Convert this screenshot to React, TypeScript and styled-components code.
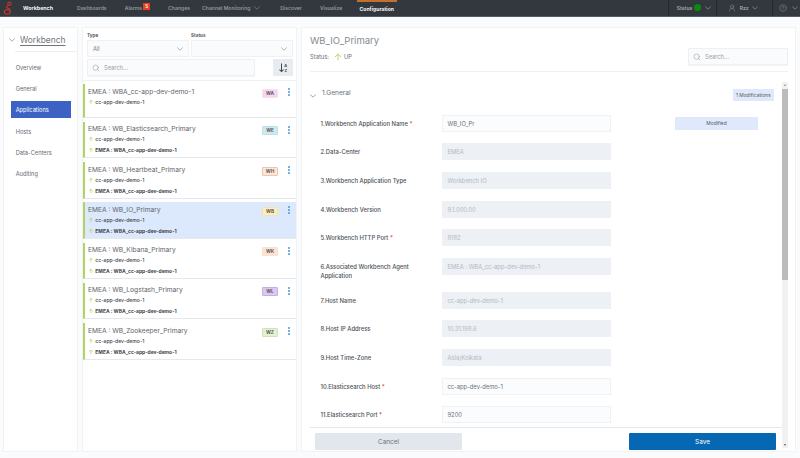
import React from 'react';
import styled, { createGlobalStyle } from 'styled-components';
import { ArrowUp, CircleHelp, Search, UserRound } from 'lucide-react';

const GlobalStyle = createGlobalStyle`
  html, body { margin: 0; padding: 0; background: #fafbfc; }
  body { font-family: Inter, "Liberation Sans", sans-serif; color: #4a4f57; }
  * { box-sizing: border-box; }
`;

const Page = styled.div`
  width: 800px;
  height: 458px;
  overflow: hidden;
  display: flex;
  flex-direction: column;
`;

const TopBar = styled.header`
  height: 17px;
  background: #32383d;
  border-bottom: 1px solid #565c66;
  display: flex;
  align-items: stretch;
  flex-shrink: 0;
`;

const Brand = styled.div`
  display: flex;
  align-items: center;
  padding-left: 3px;
  width: 77px;
  gap: 10px;
  font-size: 5.3px;
  font-weight: 700;
  color: #f2f3f4;
`;

const TopLink = styled.div<{ $left: number; $active?: boolean }>`
  display: flex;
  align-items: center;
  gap: 4px;
  margin-left: ${(p) => p.$left}px;
  padding: 0 ${(p) => (p.$active ? 3 : 0)}px ${(p) => (p.$active ? 1 : 3)}px;
  font-size: 5.1px;
  font-weight: ${(p) => (p.$active ? 700 : 600)};
  color: ${(p) => (p.$active ? '#f5f5f5' : '#8f969c')};
  border-top: 2px solid ${(p) => (p.$active ? '#c46f2c' : 'transparent')};
`;

const AlertBadge = styled.span`
  background: #e8401c;
  color: #fff;
  font-size: 4.6px;
  line-height: 7px;
  width: 7px;
  height: 7px;
  margin: -3px 0 0 -3px;
  text-align: center;
`;

const TopRight = styled.div`
  margin-left: auto;
  display: flex;
`;

const TopCell = styled.div<{ $width: number; $pad: number; $gap: number }>`
  width: ${(p) => p.$width}px;
  padding: 0 0 1px ${(p) => p.$pad}px;
  border-left: 1px solid #23272b;
  display: flex;
  align-items: center;
  gap: ${(p) => p.$gap}px;
  font-size: 5px;
  font-weight: 600;
  color: #a3a9ae;
`;

const StatusDot = styled.span`
  width: 7px;
  height: 7px;
  margin-left: -2px;
  border-radius: 50%;
  background: #0a8a12;
`;

const Body = styled.main`
  flex: 1;
  display: flex;
  gap: 4px;
  padding: 10px 4px 6px 3px;
  min-height: 0;
`;

const Panel = styled.section`
  background: #fff;
  border: 1px solid #f1f2f4;
  min-height: 0;
`;

const NavPanel = styled(Panel)`
  width: 75px;
  flex-shrink: 0;
`;

const NavHead = styled.div`
  display: flex;
  align-items: center;
  gap: 5px;
  padding-left: 5px;
  height: 23px;
  font-size: 8.4px;
  color: #6f747b;
  span { text-decoration: underline; text-underline-offset: 2px; text-decoration-thickness: 0.5px; }
`;

const NavRule = styled.div`
  height: 1px;
  margin-left: 11px;
  background: #eceef1;
  margin-bottom: 7px;
`;

const NavList = styled.nav`
  display: flex;
  flex-direction: column;
  gap: 4.2px;
  padding: 0 6px 0 7px;
`;

const NavItem = styled.div<{ $active?: boolean }>`
  height: 17px;
  line-height: 17px;
  padding-left: 4.7px;
  font-size: 5.7px;
  color: ${(p) => (p.$active ? '#fff' : '#666b72')};
  background: ${(p) => (p.$active ? '#3c62c4' : 'transparent')};
`;

const ListPanel = styled(Panel)`
  width: 215px;
  flex-shrink: 0;
  display: flex;
  flex-direction: column;
`;

const Filters = styled.div`
  display: grid;
  grid-template-columns: 101.5px 101.5px;
  column-gap: 2.5px;
  padding: 4px 0 0 4px;
`;

const FilterLabel = styled.div`
  font-size: 4.6px;
  font-weight: 700;
  color: #555a61;
  height: 8px;
  line-height: 7.5px;
`;

const Select = styled.div`
  height: 17px;
  background: #fafbfc;
  border: 1px solid #f0f1f3;
  display: flex;
  align-items: center;
  justify-content: space-between;
  padding: 0 5px;
  font-size: 5.6px;
  color: #7a7f86;
`;

const SearchRow = styled.div`
  display: flex;
  gap: 18px;
  padding: 2px 0 4px 4px;
  border-bottom: 1px solid #eef0f2;
`;

const SearchBox = styled.div<{ $width: number }>`
  width: ${(p) => p.$width}px;
  height: 17px;
  background: #fafbfc;
  border: 1px solid #eef0f2;
  border-radius: 1px;
  box-shadow: 0 1px 1px rgba(60, 70, 90, 0.06);
  display: flex;
  align-items: center;
  gap: 4px;
  padding-left: 4px;
  font-size: 5.7px;
  color: #9a9ea5;
  svg { color: #70757c; }
`;

const DetailSearch = styled(SearchBox)`
  margin-top: 20px;
`;

const SortButton = styled.div`
  width: 20px;
  height: 17px;
  background: #e8ebf0;
  display: flex;
  align-items: center;
  justify-content: center;
`;

const Cards = styled.div`
  display: flex;
  flex-direction: column;
  gap: 3.8px;
  padding-top: 3px;
`;

const Card = styled.article<{ $selected?: boolean; $short?: boolean }>`
  height: ${(p) => (p.$short ? 34 : 36.5)}px;
  display: flex;
  padding: 3.5px 0 0 3px;
  border-left: 2px solid #b2d35f;
  border-bottom: 1px solid #e6e8eb;
  background: ${(p) => (p.$selected ? '#dce8fb' : '#fff')};
`;

const CardText = styled.div`
  flex: 1;
  display: flex;
  flex-direction: column;
  min-width: 0;
`;

const CardTitle = styled.div`
  font-size: 6.65px;
  line-height: 9px;
  height: 8.5px;
  color: #60656c;
`;

const CardLine = styled.div<{ $bold?: boolean }>`
  display: flex;
  align-items: center;
  gap: 1.3px;
  height: 11px;
  font-size: ${(p) => (p.$bold ? 4.95 : 5.1)}px;
  font-weight: ${(p) => (p.$bold ? 700 : 500)};
  color: #3f444a;
`;

const Tag = styled.div<{ $bg: string; $edge: string }>`
  width: 16px;
  height: 9px;
  line-height: 7.5px;
  margin: 1px 4px 0 0;
  text-align: center;
  font-size: 4.7px;
  font-weight: 700;
  color: #5d5a58;
  background: ${(p) => p.$bg};
  border: 1px solid ${(p) => p.$edge};
  border-radius: 1px;
`;

const Kebab = styled.div`
  width: 14px;
  display: flex;
  flex-direction: column;
  align-items: center;
  gap: 1px;
  padding-top: 0.5px;
  i {
    width: 2px;
    height: 2px;
    border-radius: 50%;
    background: #4a97d6;
  }
`;

const DetailPanel = styled(Panel)`
  flex: 1;
  min-width: 0;
  display: flex;
  flex-direction: column;
  padding-right: 7px;
`;

const DetailHead = styled.div`
  margin-left: 8px;
  height: 44px;
  border-bottom: 1px solid #eef0f2;
  display: flex;
  justify-content: space-between;
  align-items: flex-start;
  flex-shrink: 0;
`;

const DetailTitle = styled.h1`
  margin: 6px 0 0;
  font-size: 9.5px;
  line-height: 13px;
  font-weight: 400;
  color: #858a91;
`;

const StatusLine = styled.div`
  margin-top: 5.5px;
  display: flex;
  align-items: center;
  gap: 4px;
  height: 8px;
  font-size: 5.8px;
  color: #6b7077;
  svg { margin-right: -3px; }
`;

const DetailScroll = styled.div`
  flex: 1;
  min-height: 0;
  display: flex;
`;

const DetailColumn = styled.div`
  flex: 1;
  min-width: 0;
  display: flex;
  flex-direction: column;
`;

const Form = styled.div`
  flex: 1;
  min-height: 0;
  overflow: hidden;
  padding: 10px 8px 0 8px;
`;

const SectionHead = styled.div`
  display: flex;
  align-items: center;
  gap: 6px;
  height: 22px;
  font-size: 6.6px;
  color: #666b72;
  margin-bottom: 5px;
  svg { margin-top: 6px; }
`;

const ModCount = styled.div`
  margin: 4px 0 0 auto;
  background: #dfe9fb;
  height: 12px;
  line-height: 12px;
  width: 41.5px;
  text-align: center;
  white-space: nowrap;
  font-size: 4.9px;
  color: #555a61;
`;

const Row = styled.div<{ $tall?: boolean }>`
  display: grid;
  grid-template-columns: 121.5px 169px 64px 83px;
  align-items: ${(p) => (p.$tall ? 'start' : 'center')};
  padding-left: 10.5px;
  height: ${(p) => (p.$tall ? 34 : 28.6)}px;
`;

const RowLabel = styled.label<{ $tall?: boolean }>`
  display: block;
  max-width: 105px;
  margin-top: ${(p) => (p.$tall ? 9.8 : 0)}px;
  font-size: 5.85px;
  line-height: 9px;
  color: #4a4f57;
  font-weight: 500;
  b { color: #e23b3b; font-weight: 500; }
`;

const Field = styled.div<{ $disabled?: boolean; $tall?: boolean }>`
  height: 17px;
  line-height: 16px;
  margin-top: ${(p) => (p.$tall ? 5.8 : 0)}px;
  padding-left: 4.5px;
  font-size: 5.8px;
  color: ${(p) => (p.$disabled ? '#b4b9c2' : '#6b7077')};
  background: ${(p) => (p.$disabled ? '#edf0f4' : '#fbfcfd')};
  border: 1px solid ${(p) => (p.$disabled ? '#edf0f4' : '#eff1f3')};
`;

const Modified = styled.div`
  grid-column: 4;
  height: 13px;
  line-height: 13px;
  text-align: center;
  font-size: 4.9px;
  color: #555a61;
  background: #dfe9fb;
`;

const ScrollTrack = styled.div`
  width: 6px;
  flex-shrink: 0;
  background: #f1f1f1;
  margin: 10px 0 3px;
  padding-top: 6.5px;
  position: relative;
  &::before,
  &::after {
    content: '';
    position: absolute;
    left: 1.5px;
    border-left: 1.5px solid transparent;
    border-right: 1.5px solid transparent;
  }
  &::before {
    top: 2px;
    border-bottom: 2px solid #8a8a8a;
  }
  &::after {
    bottom: 2px;
    border-top: 2px solid #555;
  }
`;

const ScrollThumb = styled.div`
  width: 6px;
  height: 191.5px;
  background: #bcbcbc;
`;

const Footer = styled.div`
  margin-left: 8px;
  height: 24px;
  flex-shrink: 0;
  border-top: 1px solid #e6e8eb;
  display: flex;
  justify-content: space-between;
  padding: 5px 6px 0 5px;
  background: #fff;
`;

const FootButton = styled.button<{ $primary?: boolean }>`
  width: 147px;
  height: 17px;
  border: 0;
  border-radius: 1px;
  padding: 0;
  font-family: inherit;
  font-size: 6.4px;
  color: ${(p) => (p.$primary ? '#fff' : '#6b7077')};
  background: ${(p) => (p.$primary ? '#0668b3' : '#e2e6ed')};
`;

const cards = [
  { title: 'WBA_cc-app-dev-demo-1', tag: 'WA', bg: '#f6d4f2', edge: '#f3e2f1', agent: false },
  { title: 'WB_Elasticsearch_Primary', tag: 'WE', bg: '#cdeaf0', edge: '#bfe0e6', agent: true },
  { title: 'WB_Heartbeat_Primary', tag: 'WH', bg: '#fbe7d9', edge: '#ecc6ad', agent: true },
  { title: 'WB_IO_Primary', tag: 'WB', bg: '#fbeec0', edge: '#f4e3b0', agent: true, selected: true },
  { title: 'WB_Kibana_Primary', tag: 'WK', bg: '#fde3d2', edge: '#f7e2d5', agent: true },
  { title: 'WB_Logstash_Primary', tag: 'WL', bg: '#dcc9f2', edge: '#c5aee6', agent: true },
  { title: 'WB_Zookeeper_Primary', tag: 'WZ', bg: '#e3f2d2', edge: '#cfe3b8', agent: true },
];

const fields = [
  { label: '2.Data-Center', value: 'EMEA', disabled: true },
  { label: '3.Workbench Application Type', value: 'Workbench IO', disabled: true },
  { label: '4.Workbench Version', value: '9.1.000.00', disabled: true },
  { label: '5.Workbench HTTP Port', value: '8182', disabled: true, required: true },
  { label: '6.Associated Workbench Agent Application', value: 'EMEA : WBA_cc-app-dev-demo-1', disabled: true, tall: true },
  { label: '7.Host Name', value: 'cc-app-dev-demo-1', disabled: true },
  { label: '8.Host IP Address', value: '10.31.198.6', disabled: true },
  { label: '9.Host Time-Zone', value: 'Asia/Kolkata', disabled: true },
  { label: '10.Elasticsearch Host', value: 'cc-app-dev-demo-1', required: true },
  { label: '11.Elasticsearch Port', value: '9200', required: true },
];

const UpArrow = () => <ArrowUp size={6} strokeWidth={2.4} color="#a9cf5c" />;

const Chevron = () => (
  <svg width="6" height="4" viewBox="0 0 6 4" fill="none" stroke="currentColor" strokeWidth="0.6" style={{ flexShrink: 0 }}>
    <path d="M0.3 0.6 L3 3.2 L5.7 0.6" />
  </svg>
);

const Logo = () => (
  <svg width="10" height="15" viewBox="0 0 10 15" fill="none" stroke="#c8342c" strokeWidth="1.1">
    <circle cx="6.5" cy="2.6" r="1.6" />
    <path d="M5.6 4.2 C3 5 3 7 5 7.4 C7.4 7.9 7.4 9 6.6 9.6" />
    <ellipse cx="4.2" cy="11" rx="3" ry="2.2" />
  </svg>
);

const SortIcon = () => (
  <svg width="9" height="10" viewBox="0 0 9 10" fill="#40464d">
    <path d="M2 0.5h1v7l1.2-1.2.6.6L2.5 9.2.2 6.9l.6-.6L2 7.5z" />
    <text x="5.3" y="4" fontSize="3.8" fontWeight="700" fontFamily="Inter">A</text>
    <text x="5.4" y="9" fontSize="3.8" fontWeight="700" fontFamily="Inter">Z</text>
  </svg>
);

export default function App() {
  return (
    <Page>
      <GlobalStyle />
      <TopBar>
        <Brand>
          <Logo />
          Workbench
        </Brand>
        <TopLink $left={0}>Dashboards</TopLink>
        <TopLink $left={18}>
          Alarms
          <AlertBadge>5</AlertBadge>
        </TopLink>
        <TopLink $left={18}>Changes</TopLink>
        <TopLink $left={12}>
          Channel Monitoring
          <Chevron />
        </TopLink>
        <TopLink $left={19.7}>Discover</TopLink>
        <TopLink $left={18}>Visualize</TopLink>
        <TopLink $left={14.3} $active>Configuration</TopLink>
        <TopRight>
          <TopCell $width={48.6} $pad={8} $gap={4}>
            Status
            <StatusDot />
            <Chevron />
          </TopCell>
          <TopCell $width={55.4} $pad={11} $gap={3.4}>
            <UserRound size={8} strokeWidth={1.2} />
            Rzz
            <Chevron />
          </TopCell>
          <TopCell $width={28.3} $pad={6} $gap={5}>
            <CircleHelp size={8} strokeWidth={1.2} />
            <Chevron />
          </TopCell>
        </TopRight>
      </TopBar>
      <Body>
        <NavPanel>
          <NavHead>
            <Chevron />
            <span>Workbench</span>
          </NavHead>
          <NavRule />
          <NavList>
            <NavItem>Overview</NavItem>
            <NavItem>General</NavItem>
            <NavItem $active>Applications</NavItem>
            <NavItem>Hosts</NavItem>
            <NavItem>Data-Centers</NavItem>
            <NavItem>Auditing</NavItem>
          </NavList>
        </NavPanel>
        <ListPanel>
          <Filters>
            <div>
              <FilterLabel>Type</FilterLabel>
              <Select>
                All
                <Chevron />
              </Select>
            </div>
            <div>
              <FilterLabel>Status</FilterLabel>
              <Select>
                <span />
                <Chevron />
              </Select>
            </div>
          </Filters>
          <SearchRow>
            <SearchBox $width={168}>
              <Search size={8} strokeWidth={1.2} />
              Search...
            </SearchBox>
            <SortButton>
              <SortIcon />
            </SortButton>
          </SearchRow>
          <Cards>
            {cards.map((c) => (
              <Card key={c.tag} $selected={c.selected} $short={!c.agent}>
                <CardText>
                  <CardTitle>EMEA : {c.title}</CardTitle>
                  <CardLine>
                    <UpArrow />
                    cc-app-dev-demo-1
                  </CardLine>
                  {c.agent && (
                    <CardLine $bold>
                      <UpArrow />
                      EMEA : WBA_cc-app-dev-demo-1
                    </CardLine>
                  )}
                </CardText>
                <Tag $bg={c.bg} $edge={c.edge}>{c.tag}</Tag>
                <Kebab>
                  <i />
                  <i />
                  <i />
                </Kebab>
              </Card>
            ))}
          </Cards>
        </ListPanel>
        <DetailPanel>
          <DetailHead>
            <div>
              <DetailTitle>WB_IO_Primary</DetailTitle>
              <StatusLine>
                Status:
                <ArrowUp size={10} strokeWidth={2} color="#a9cf5c" />
                UP
              </StatusLine>
            </div>
            <DetailSearch $width={100}>
              <Search size={8} strokeWidth={1.2} />
              Search...
            </DetailSearch>
          </DetailHead>
          <DetailScroll>
            <DetailColumn>
              <Form>
                <SectionHead>
                  <Chevron />
                  1.General
                  <ModCount>1 Modifications</ModCount>
                </SectionHead>
                <Row>
                  <RowLabel>1.Workbench Application Name <b>*</b></RowLabel>
                  <Field>WB_IO_Pr</Field>
                  <Modified>Modified</Modified>
                </Row>
                {fields.map((f) => (
                  <Row key={f.label} $tall={f.tall}>
                    <RowLabel $tall={f.tall}>
                      {f.label}
                      {f.required && <b> *</b>}
                    </RowLabel>
                    <Field $disabled={f.disabled} $tall={f.tall}>{f.value}</Field>
                  </Row>
                ))}
              </Form>
              <Footer>
                <FootButton>Cancel</FootButton>
                <FootButton $primary>Save</FootButton>
              </Footer>
            </DetailColumn>
            <ScrollTrack>
              <ScrollThumb />
            </ScrollTrack>
          </DetailScroll>
        </DetailPanel>
      </Body>
    </Page>
  );
}
